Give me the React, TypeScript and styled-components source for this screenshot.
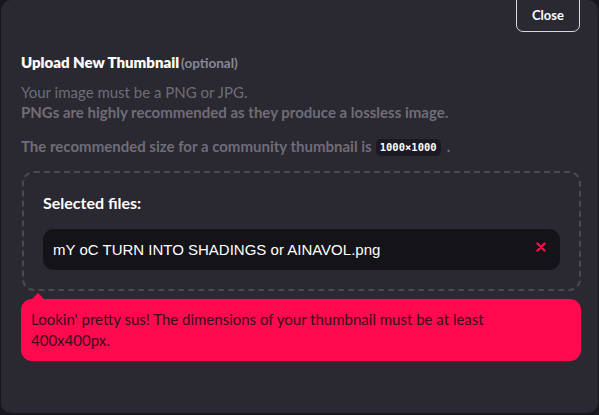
import React from "react";
import styled, { createGlobalStyle } from "styled-components";

const Global = createGlobalStyle`
  html, body { margin: 0; padding: 0; background: #18171c; }
  body { width: 599px; height: 415px; overflow: hidden; font-family: Lato, "Noto Sans", sans-serif; }
`;

const Panel = styled.div`
  box-sizing: border-box;
  margin-left: 1px;
  width: 597px;
  height: 413px;
  background: #2a2830;
  border-radius: 10px;
  overflow: hidden;
  padding: 0 17px 0 20px;
  display: flex;
  flex-direction: column;
`;

const Header = styled.div`
  height: 32px;
  display: flex;
  justify-content: flex-end;
  align-items: flex-end;
  padding-right: 1px;
`;

const CloseButton = styled.button`
  box-sizing: border-box;
  width: 64px;
  height: 40px;
  flex-shrink: 0;
  background: transparent;
  border: 1px solid #d8d6de;
  border-radius: 7px;
  color: #ffffff;
  font-family: Lato, sans-serif;
  font-weight: 700;
  font-size: 13px;
  padding: 6px 0 0 0;
`;

const Title = styled.div`
  margin-top: 21px;
  color: #ffffff;
  font-weight: 800;
  font-size: 15px;
  line-height: 19px;
`;

const Optional = styled.span`
  color: #8b8994;
  font-size: 13.5px;
  font-weight: 700;
  margin-left: 2px;
`;

const Note = styled.p<{ $bold?: boolean; $gap?: number }>`
  margin: ${(p) => p.$gap ?? 0}px 0 0 0;
  color: #6f6d79;
  font-size: 15px;
  line-height: 20px;
  font-weight: ${(p) => (p.$bold ? 700 : 400)};
`;

const Code = styled.code`
  display: inline-block;
  font-family: "DejaVu Sans Mono", monospace;
  font-size: 10.5px;
  font-weight: 700;
  color: #ffffff;
  background: #1b1a20;
  border-radius: 5px;
  padding: 1px 4px;
  line-height: 15px;
  margin: 0 6px 0 4px;
  vertical-align: 1px;
`;

const DropZone = styled.div`
  margin: 15px 0 0 1px;
  box-sizing: border-box;
  height: 120px;
  border: 2px dashed #4a4852;
  border-radius: 12px;
  padding: 20px 19px 0 19px;
  display: flex;
  flex-direction: column;
`;

const ZoneLabel = styled.div`
  color: #ffffff;
  font-weight: 700;
  font-size: 16px;
  line-height: 20px;
`;

const FileRow = styled.div`
  margin-top: 16px;
  height: 41px;
  background: #141317;
  border-radius: 11px;
  display: flex;
  align-items: center;
  justify-content: space-between;
  padding: 0 14px 0 10px;
`;

const FileName = styled.span`
  font-family: "Liberation Sans", Arial, sans-serif;
  font-size: 15px;
  color: #ffffff;
`;

const RemoveIcon = styled.svg`
  width: 10px;
  height: 10px;
  margin-bottom: 5px;
`;

const ErrorBubble = styled.div`
  position: relative;
  margin-top: 8px;
  background: #ff0a4f;
  border-radius: 11px;
  padding: 10px 48px 10px 10px;
  color: #3a0d1c;
  font-size: 15px;
  line-height: 21px;
  &::before {
    content: "";
    position: absolute;
    left: 11px;
    top: -6px;
    border-left: 6px solid transparent;
    border-right: 6px solid transparent;
    border-bottom: 6px solid #ff0a4f;
  }
`;

export default function App() {
  return (
    <>
      <Global />
      <Panel>
        <Header>
          <CloseButton>Close</CloseButton>
        </Header>
        <Title>
          Upload New Thumbnail<Optional>(optional)</Optional>
        </Title>
        <Note $gap={9}>Your image must be a PNG or JPG.</Note>
        <Note $bold>PNGs are highly recommended as they produce a lossless image.</Note>
        <Note $bold $gap={14}>
          The recommended size for a community thumbnail is<Code>1000×1000</Code>.
        </Note>
        <DropZone>
          <ZoneLabel>Selected files:</ZoneLabel>
          <FileRow>
            <FileName>mY oC TURN INTO SHADINGS or AINAVOL.png</FileName>
            <RemoveIcon viewBox="0 0 10 10">
              <path d="M1.5 1.5 L8.5 8.5 M8.5 1.5 L1.5 8.5" stroke="#ff0a4f" strokeWidth="2.4" strokeLinecap="round" />
            </RemoveIcon>
          </FileRow>
        </DropZone>
        <ErrorBubble>
          Lookin' pretty sus! The dimensions of your thumbnail must be at least 400x400px.
        </ErrorBubble>
      </Panel>
    </>
  );
}
